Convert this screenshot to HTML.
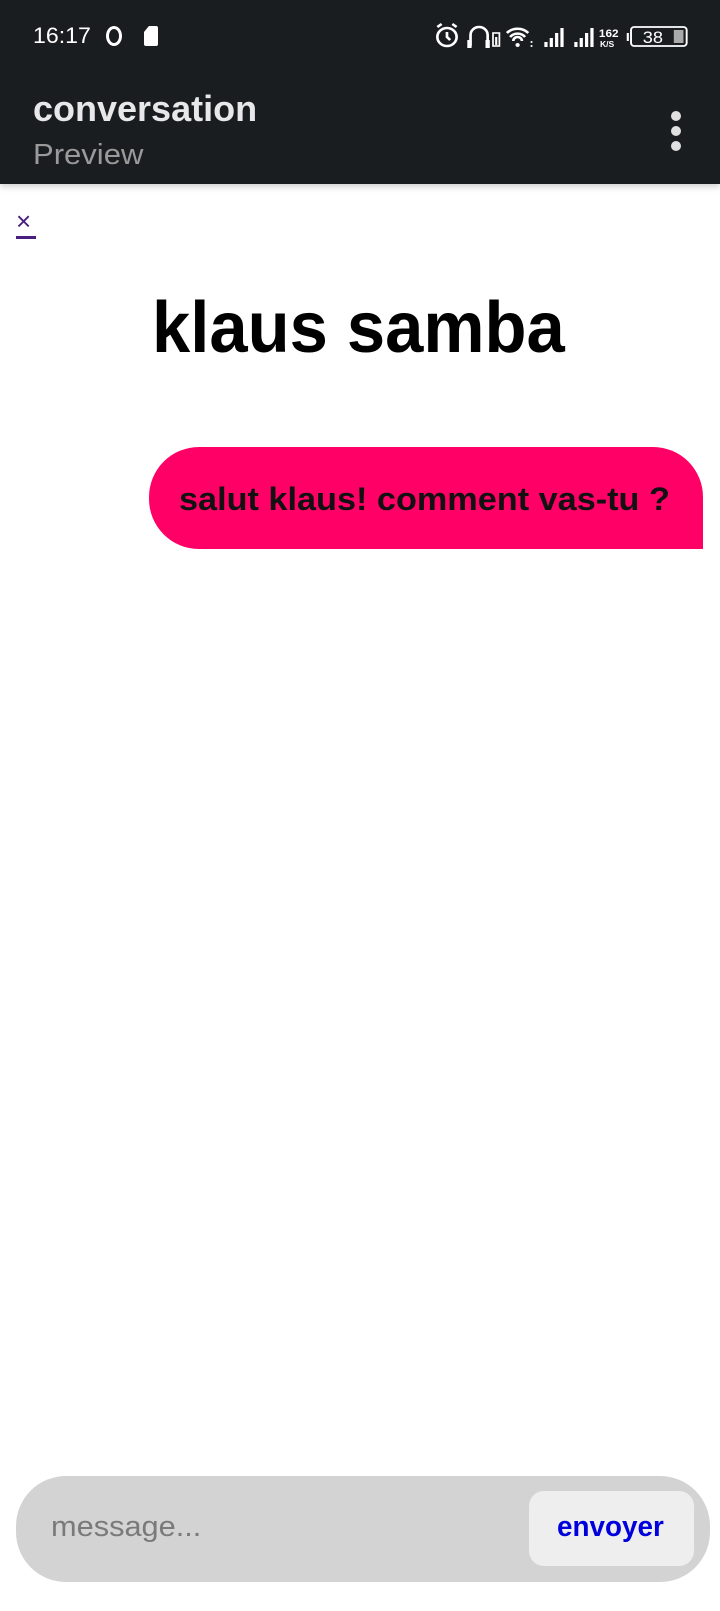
<!DOCTYPE html>
<html><head><meta charset="utf-8"><style>
*{margin:0;padding:0;box-sizing:border-box}
body{width:720px;height:1611px;background:#fff;font-family:"Liberation Sans",sans-serif;position:relative;overflow:hidden}
.hdr{position:absolute;left:0;top:0;width:720px;height:184px;background:#1a1d20;box-shadow:0 3px 6px rgba(0,0,0,.18)}
.t{position:absolute;white-space:nowrap;transform-origin:left center}
</style></head><body>
<div class="hdr">
  <div class="t" style="left:33px;top:23px;font-size:22px;color:#fff;transform:scaleX(1.05)">16:17</div>
  <div style="position:absolute;left:106px;top:26px;width:16px;height:20px;border:3.5px solid #fff;border-radius:50%"></div>
  <div style="position:absolute;left:144px;top:26px;width:14px;height:20px;background:#fff;border-radius:2px 2px 2px 2px;clip-path:polygon(35% 0,100% 0,100% 100%,0 100%,0 30%)"></div>
  <svg style="position:absolute;left:432px;top:22px;transform:scaleX(1.07);transform-origin:left" width="260" height="28" viewBox="0 0 260 28">
    <g fill="none" stroke="#fff" stroke-width="2.5">
      <circle cx="14" cy="15" r="9"/><path d="M14 10v5l3 3M5 5l4-3M23 5l-4-3"/>
      <path d="M36 24V13a8 8 0 0 1 16 0v11"/>
      <path d="M70 11a14 14 0 0 1 20 0M73 15a9 9 0 0 1 14 0M76 19a4 4 0 0 1 8 0"/>
    </g>
    <rect x="33" y="18" width="4" height="8" fill="#fff"/><rect x="50" y="18" width="4" height="8" fill="#fff"/>
    <rect x="57" y="11" width="6" height="13" fill="none" stroke="#fff" stroke-width="1.6"/><rect x="59" y="15" width="2" height="8" fill="#fff"/>
    <circle cx="80" cy="23" r="2" fill="#fff"/><circle cx="93" cy="20" r="1" fill="#fff"/><circle cx="93" cy="24" r="1" fill="#fff"/>
    <rect x="105" y="20" width="3" height="5" fill="#fff"/><rect x="110" y="16" width="3" height="9" fill="#fff"/><rect x="115" y="11" width="3" height="14" fill="#fff"/><rect x="120" y="6" width="3" height="19" fill="#fff"/>
    <rect x="133" y="20" width="3" height="5" fill="#fff"/><rect x="138" y="16" width="3" height="9" fill="#fff"/><rect x="143" y="11" width="3" height="14" fill="#fff"/><rect x="148" y="6" width="3" height="19" fill="#fff"/>
    <text x="156" y="15" font-size="11" font-weight="bold" fill="#fff" font-family="Liberation Sans">162</text>
    <text x="157" y="25" font-size="8" font-weight="bold" fill="#fff" font-family="Liberation Sans">K/S</text>
    <rect x="182" y="11" width="2" height="8" fill="#fff"/>
    <rect x="186" y="5" width="52" height="19" rx="3" fill="none" stroke="#fff" stroke-width="1.8"/>
    <rect x="226" y="8" width="9" height="13" fill="#aaa"/>
    <text x="197" y="21" font-size="17" fill="#fff" font-family="Liberation Sans">38</text>
  </svg>
  <div class="t" style="left:33px;top:88px;font-size:36px;font-weight:bold;color:#e8e8e8;transform:scaleX(1.0)">conversation</div>
  <div class="t" style="left:33px;top:139px;font-size:29px;color:#9a9a9a;transform:scaleX(1.07)">Preview</div>
  <div style="position:absolute;left:671px;top:111px;width:10px;height:10px;border-radius:50%;background:#e0e0e0;box-shadow:0 15px 0 #e0e0e0,0 30px 0 #e0e0e0"></div>
</div>
<div class="t" style="left:16px;top:206px;font-size:26px;color:#4a1e7f">×</div>
<div style="position:absolute;left:16px;top:236px;width:20px;height:3px;background:#4a1e7f"></div>
<div class="t" style="left:152px;top:287px;font-size:72px;font-weight:bold;color:#000;transform:scaleX(.955)">klaus samba</div>
<div style="position:absolute;left:149px;top:447px;width:554px;height:102px;background:#ff0066;border-radius:50px 50px 0 50px"></div>
<div class="t" style="left:179px;top:481px;font-size:32px;font-weight:bold;color:#111;transform:scaleX(1.07)">salut klaus! comment vas-tu ?</div>
<div style="position:absolute;left:16px;top:1476px;width:694px;height:106px;background:#d3d3d3;border-radius:50px"></div>
<div class="t" style="left:51px;top:1511px;font-size:29px;color:#7a7a7a;transform:scaleX(1.06)">message...</div>
<div style="position:absolute;left:529px;top:1491px;width:165px;height:75px;background:#eeeeee;border-radius:15px"></div>
<div class="t" style="left:557px;top:1511px;font-size:29px;font-weight:bold;color:#0000dd;transform:scaleX(.96)">envoyer</div>
</body></html>
